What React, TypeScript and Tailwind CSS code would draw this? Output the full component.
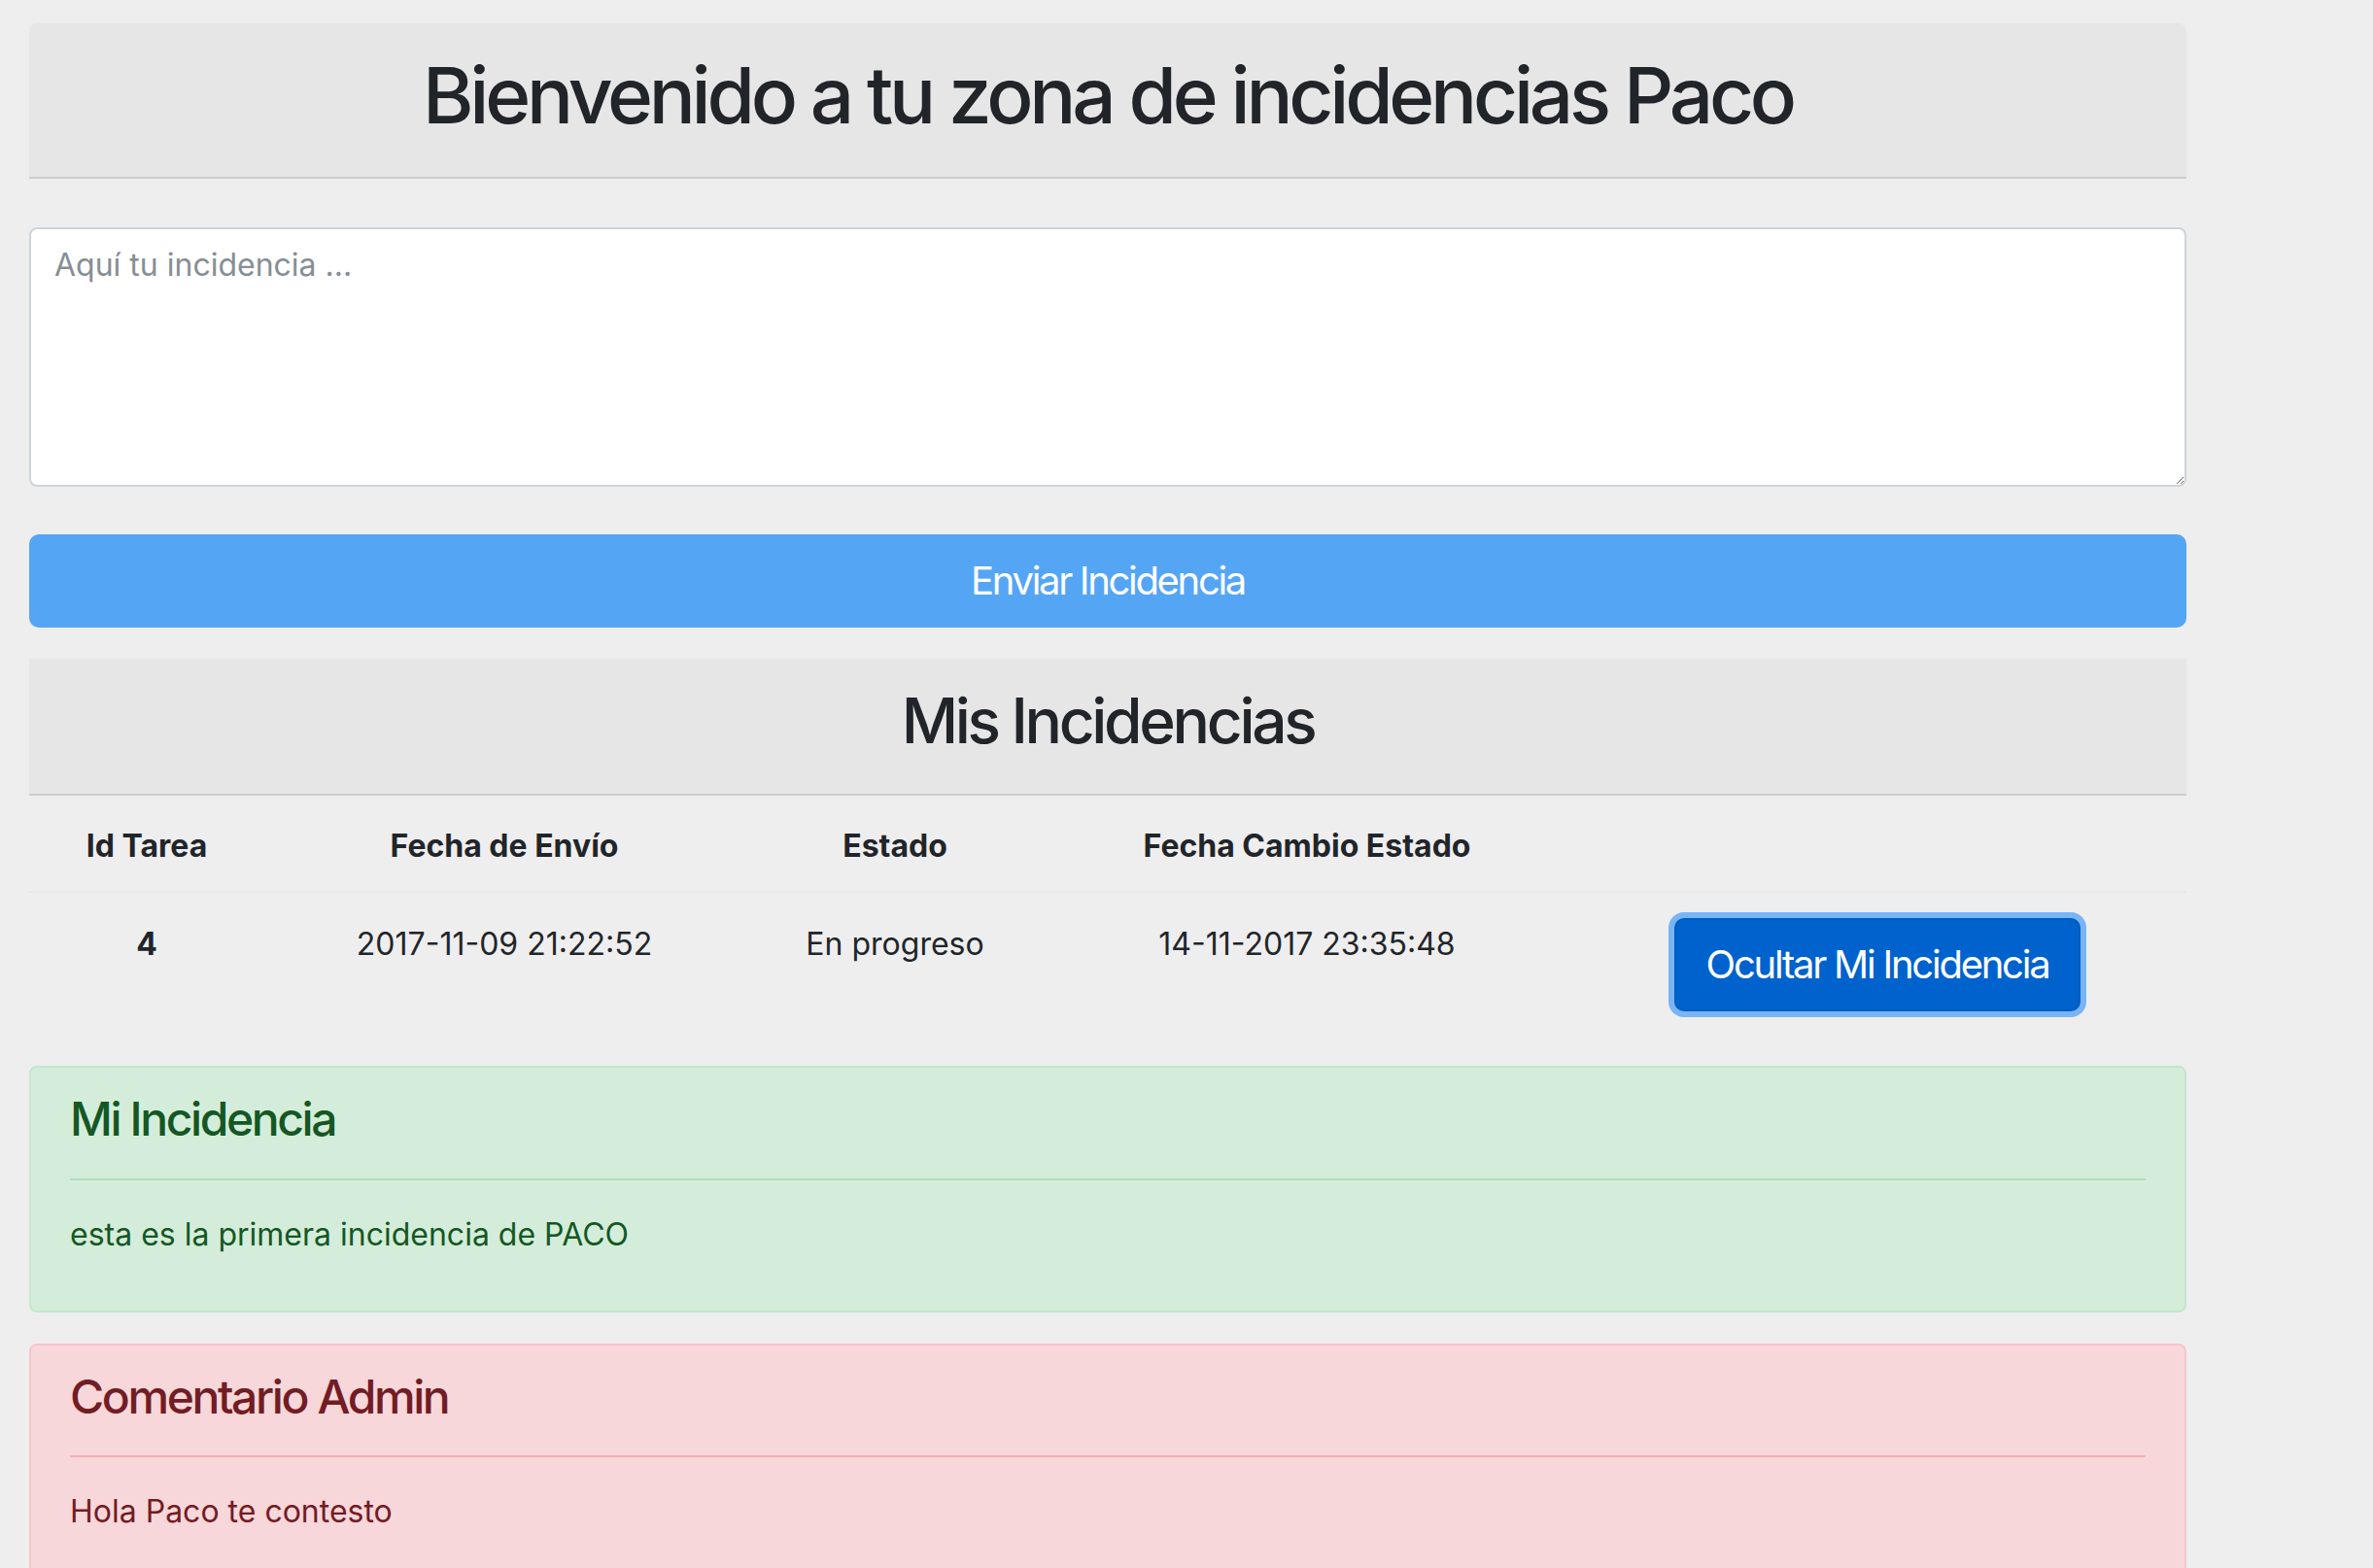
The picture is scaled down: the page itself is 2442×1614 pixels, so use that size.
import { useState } from "react";

const font = { fontFamily: "Inter, 'Noto Sans', 'Liberation Sans', sans-serif" };

function Alert({
  title,
  body,
  tone,
}: {
  title: string;
  body: string;
  tone: "success" | "danger";
}) {
  const box =
    tone === "success"
      ? "border-[#c3e6cb] bg-[#d4edda] text-[#155724]"
      : "border-[#f5c6cb] bg-[#f8d7da] text-[#721c24]";
  const rule = tone === "success" ? "border-[#b1dfbb]" : "border-[#f1b0b7]";

  return (
    <div className={`mb-[32px] rounded-[8px] border-2 px-[40px] pt-[24px] pb-[24px] ${box}`}>
      <h4 className="text-[48px] leading-[57.6px] font-medium tracking-[-0.05em]">{title}</h4>
      <hr className={`my-[32px] border-t-2 ${rule}`} />
      <p className="mb-[30px] text-[32px] leading-[48px]">{body}</p>
    </div>
  );
}

export default function App() {
  const [text, setText] = useState("");

  return (
    <div className="min-h-screen bg-[#eeeeee] text-[#212529]" style={font}>
      <div className="ml-[30px] w-[2220px] pt-[24px]">
        <div className="h-[160px] rounded-t-[8px] border-b-2 border-[#cccccc] bg-[#e6e6e6] pt-[26px] text-center">
          <h1 className="text-[80px] leading-[96px] font-medium tracking-[-0.053em]">
            Bienvenido a tu zona de incidencias Paco
          </h1>
        </div>

        <textarea
          value={text}
          onChange={(e) => setText(e.target.value)}
          placeholder="Aquí tu incidencia ..."
          className="mt-[50px] block h-[267px] w-full rounded-[8px] border-2 border-[#ced4da] bg-white px-[24px] pt-[13px] pb-[12px] text-[32px] leading-[48px] text-[#495057] outline-none placeholder:text-[#868e96]"
        />

        <button className="mt-[49px] block h-[96px] w-full rounded-[10px] bg-[#55a5f5] text-[40px] leading-[60px] tracking-[-0.058em] text-white">
          Enviar Incidencia
        </button>

        <div className="mt-[32px] h-[141px] border-b-2 border-[#cccccc] bg-[#e6e6e6] pt-[26px] text-center">
          <h2 className="text-[64px] leading-[76.8px] font-medium tracking-[-0.052em]">Mis Incidencias</h2>
        </div>

        <table className="mb-[32px] w-full table-fixed text-[32px] leading-[48px]">
          <thead>
            <tr className="h-[99px] align-top">
              <th className="w-[242px] pt-[28px] font-bold">Id Tarea</th>
              <th className="w-[494px] pt-[28px] font-bold">Fecha de Envío</th>
              <th className="w-[310px] pt-[28px] font-bold">Estado</th>
              <th className="w-[538px] pt-[28px] font-bold">Fecha Cambio Estado</th>
              <th className="pt-[28px]"></th>
            </tr>
          </thead>
          <tbody>
            <tr className="border-t-2 border-[#e6e9ec] align-top">
              <th className="pt-[29px] pb-[24px] font-bold">4</th>
              <td className="pt-[29px] text-center">2017-11-09 21:22:52</td>
              <td className="pt-[29px] text-center">En progreso</td>
              <td className="pt-[29px] text-center">14-11-2017 23:35:48</td>
              <td className="pt-[26px] pb-[24px] text-center">
                <button className="inline-block h-[96px] w-[418px] rounded-[10px] border-2 border-[#005cbf] bg-[#0062cc] text-[40px] leading-[60px] tracking-[-0.056em] text-white shadow-[0_0_0_6px_rgba(0,123,255,0.5)]">
                  Ocultar Mi Incidencia
                </button>
              </td>
            </tr>
          </tbody>
        </table>

        <Alert tone="success" title="Mi Incidencia" body="esta es la primera incidencia de PACO" />
        <Alert tone="danger" title="Comentario Admin" body="Hola Paco te contesto" />
      </div>
    </div>
  );
}
